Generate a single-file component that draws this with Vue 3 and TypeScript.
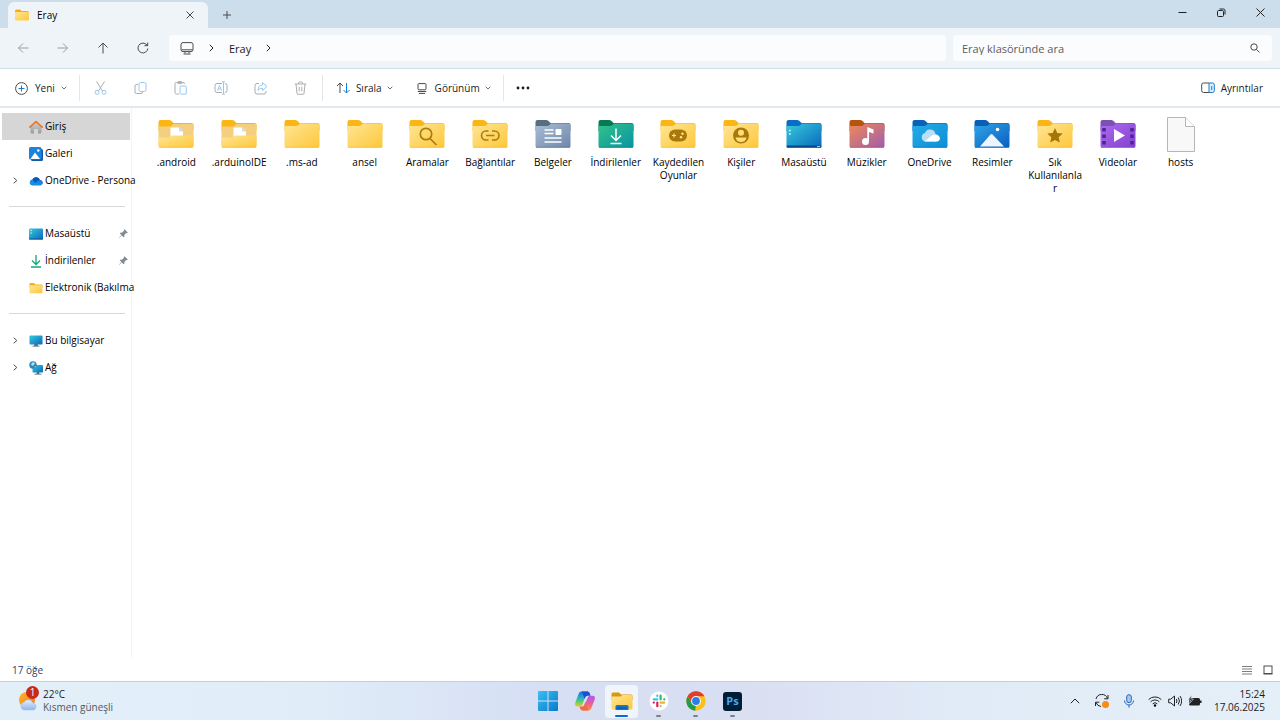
<script setup lang="ts">
type FileKind =
  | 'docs' | 'plain' | 'search' | 'link' | 'text' | 'download' | 'game' | 'person'
  | 'desktop' | 'music' | 'cloud' | 'picture' | 'star' | 'video' | 'file'

interface FileEntry { name: string; kind: FileKind; tone: string }
interface NavEntry { name: string; icon: string; expand?: boolean; pinned?: boolean; active?: boolean }

const files: FileEntry[] = [
  { name: '.android', kind: 'docs', tone: 'yellow' },
  { name: '.arduinoIDE', kind: 'docs', tone: 'yellow' },
  { name: '.ms-ad', kind: 'plain', tone: 'yellow' },
  { name: 'ansel', kind: 'plain', tone: 'yellow' },
  { name: 'Aramalar', kind: 'search', tone: 'yellow' },
  { name: 'Bağlantılar', kind: 'link', tone: 'yellow' },
  { name: 'Belgeler', kind: 'text', tone: 'slate' },
  { name: 'İndirilenler', kind: 'download', tone: 'green' },
  { name: 'Kaydedilen Oyunlar', kind: 'game', tone: 'yellow' },
  { name: 'Kişiler', kind: 'person', tone: 'yellow' },
  { name: 'Masaüstü', kind: 'desktop', tone: 'cyan' },
  { name: 'Müzikler', kind: 'music', tone: 'rose' },
  { name: 'OneDrive', kind: 'cloud', tone: 'sky' },
  { name: 'Resimler', kind: 'picture', tone: 'blue' },
  { name: 'Sık Kullanılanlar', kind: 'star', tone: 'yellow' },
  { name: 'Videolar', kind: 'video', tone: 'violet' },
  { name: 'hosts', kind: 'file', tone: '' },
]

const tones = [
  { id: 'yellow', from: '#ffe596', to: '#fdc83a', tab: '#fbb615' },
  { id: 'slate', from: '#a9bdd4', to: '#6e87aa', tab: '#566e80' },
  { id: 'green', from: '#34c28a', to: '#0794a3', tab: '#077a53' },
  { id: 'cyan', from: '#35cbdc', to: '#0a68bd', tab: '#0a6ec8' },
  { id: 'rose', from: '#f08a56', to: '#a05cae', tab: '#b4540f' },
  { id: 'sky', from: '#27abe6', to: '#0a8fd8', tab: '#0a62b4' },
  { id: 'blue', from: '#2fa4e8', to: '#0a5fbf', tab: '#0a5fb4' },
  { id: 'violet', from: '#ac6cf0', to: '#8440cf', tab: '#7d50b4' },
]

const navGroups: NavEntry[][] = [
  [
    { name: 'Giriş', icon: 'home', active: true },
    { name: 'Galeri', icon: 'gallery' },
    { name: 'OneDrive - Persona', icon: 'onedrive', expand: true },
  ],
  [
    { name: 'Masaüstü', icon: 'desktop', pinned: true },
    { name: 'İndirilenler', icon: 'download', pinned: true },
    { name: 'Elektronik (Bakılma', icon: 'folder' },
  ],
  [
    { name: 'Bu bilgisayar', icon: 'pc', expand: true },
    { name: 'Ağ', icon: 'network', expand: true },
  ],
]

const tabOf = (tone: string): string => tones.find(t => t.id === tone)?.tab ?? '#fbb615'
</script>

<template>
  <div class="screen">
    <svg class="defs" aria-hidden="true">
      <defs>
        <linearGradient v-for="t in tones" :id="'g-' + t.id" :key="t.id" x1="0" y1="0" x2="1" y2="1">
          <stop offset="0" :stop-color="t.from" /><stop offset="1" :stop-color="t.to" />
        </linearGradient>
        <linearGradient id="g-win" x1="0" y1="0" x2="1" y2="1">
          <stop offset="0" stop-color="#3cc0ee" /><stop offset="1" stop-color="#0878cc" />
        </linearGradient>
        <linearGradient id="g-home" x1="0" y1="0" x2="0" y2="1">
          <stop offset="0" stop-color="#d2d2d2" /><stop offset="1" stop-color="#9b9b9b" />
        </linearGradient>
        <linearGradient id="g-cop1" x1="0" y1="0" x2="0" y2="1">
          <stop offset="0" stop-color="#1c6fe0" /><stop offset="0.45" stop-color="#22b4c8" /><stop offset="0.75" stop-color="#7fcf4c" /><stop offset="1" stop-color="#f0c62c" />
        </linearGradient>
        <linearGradient id="g-cop2" x1="0" y1="0" x2="0" y2="1">
          <stop offset="0" stop-color="#a55df0" /><stop offset="0.5" stop-color="#ee5b9b" /><stop offset="1" stop-color="#f79438" />
        </linearGradient>
        <linearGradient id="g-sun" x1="0" y1="0" x2="1" y2="1">
          <stop offset="0" stop-color="#ffb52a" /><stop offset="1" stop-color="#f07a12" />
        </linearGradient>
        <linearGradient id="g-haze" x1="0" y1="0" x2="0" y2="1">
          <stop offset="0" stop-color="#e2eefc" /><stop offset="1" stop-color="#8fb6ee" />
        </linearGradient>
      </defs>
    </svg>

    <header class="titlebar">
      <div class="tab">
        <svg class="tab-icon" width="14" height="12" viewBox="0 0 14 12"><path d="M0 2q0-1.500 1.500-1.500h3.500l1.500 1.500h6q1.500 0 1.500 1.500v2H0z" fill="#f5ae17" /><rect y="3" width="14" height="8.500" rx="1" fill="url(#g-yellow)" /></svg>
        <span class="tab-title">Eray</span>
        <button class="tab-close" aria-label="Sekmeyi kapat"><svg width="8" height="8" viewBox="0 0 8 8"><path d="M.5.5l7 7M7.500.5l-7 7" class="ink" /></svg></button>
      </div>
      <button class="tab-add" aria-label="Yeni sekme"><svg width="8" height="8" viewBox="0 0 8 8"><path d="M4 0v8M0 4h8" class="ink" /></svg></button>
      <div class="win-controls">
        <button aria-label="Küçült"><svg width="9" height="9" viewBox="0 0 9 9"><path d="M.5 4.500h8" class="ink" /></svg></button>
        <button aria-label="Geri yükle"><svg width="9" height="9" viewBox="0 0 9 9"><rect x=".5" y="2.500" width="6" height="6" rx="1" class="ink" /><path d="M2.500 1h4q1.500 0 1.500 1.500v4" class="ink" /></svg></button>
        <button aria-label="Kapat"><svg width="9" height="9" viewBox="0 0 9 9"><path d="M.5.5l8 8M8.500.5l-8 8" class="ink" /></svg></button>
      </div>
    </header>

    <nav class="navbar" aria-label="Gezinti">
      <div class="nav-buttons">
        <button aria-label="Geri"><svg class="faded" width="12" height="12" viewBox="0 0 12 12"><path d="M6 1.500L1.500 6 6 10.500M1.500 6h10" class="ink" /></svg></button>
        <button aria-label="İleri"><svg class="faded" width="12" height="12" viewBox="0 0 12 12"><path d="M6 1.500L10.500 6 6 10.500M10.500 6H.5" class="ink" /></svg></button>
        <button aria-label="Yukarı"><svg width="12" height="12" viewBox="0 0 12 12"><path d="M1.500 5.500L6 1l4.500 4.500M6 1v10.500" class="ink" /></svg></button>
        <button aria-label="Yenile"><svg width="12" height="12" viewBox="0 0 12 12"><path d="M10.800 6.500A4.900 4.900 0 1 1 9 2.200L10.500 3.500M10.700.5v3.200H7.500" class="ink" /></svg></button>
      </div>
      <div class="address">
        <button aria-label="Konumlar"><svg width="14" height="13" viewBox="0 0 14 13"><rect x="1" y=".6" width="12" height="9" rx="2" class="ink" /><path d="M1.500 7.800h11M5 9.800v1.500M9 9.800v1.500M3.500 12h7" class="ink" /></svg></button>
        <svg class="crumb-sep" width="5" height="8" viewBox="0 0 5 8"><path d="M.8.8L4 4 .8 7.200" class="ink dark" /></svg>
        <a href="#" class="crumb">Eray</a>
        <svg class="crumb-sep" width="5" height="8" viewBox="0 0 5 8"><path d="M.8.8L4 4 .8 7.200" class="ink dark" /></svg>
      </div>
      <label class="search">
        <input type="text" placeholder="Eray klasöründe ara" aria-label="Eray klasöründe ara">
        <svg width="10" height="10" viewBox="0 0 10 10"><circle cx="4" cy="4" r="3.200" class="ink" /><path d="M6.300 6.300L9.500 9.500" class="ink" /></svg>
      </label>
    </nav>

    <div class="toolbar" role="toolbar">
      <button class="command first">
        <svg width="13" height="13" viewBox="0 0 13 13"><circle cx="6.500" cy="6.500" r="5.900" class="ink" /><path d="M6.500 3.500v6M3.500 6.500h6" class="accent" /></svg>
        <span>Yeni</span>
        <svg class="chev" width="6" height="4" viewBox="0 0 6 4"><path d="M.7.700L3 3 5.300.7" class="ink" /></svg>
      </button>
      <div class="tools">
        <button aria-label="Kes"><svg class="muted" width="13" height="14" viewBox="0 0 13 14"><path d="M2.500.5l6 9.500M10.500.5L4.500 10" class="ink" /><circle cx="3" cy="11.300" r="2" class="accent" /><circle cx="10" cy="11.300" r="2" class="accent" /></svg></button>
        <button aria-label="Kopyala"><svg class="muted" width="13" height="14" viewBox="0 0 13 14"><path d="M4 3.500H2.500Q1 3.500 1 5v6q0 1.500 1.500 1.500h4.500Q8.500 12.500 8.500 11" class="ink" /><rect x="5" y="1.500" width="7" height="9" rx="1.700" class="accent" /></svg></button>
        <button aria-label="Yapıştır"><svg class="muted" width="13" height="14" viewBox="0 0 13 14"><path d="M5 13H2.500Q1 13 1 11.500v-9Q1 1.500 2.500 1.500h6.500Q10.500 1.500 10.500 3" class="ink" /><rect x="3.500" y=".6" width="4.500" height="2" rx="1" class="ink" /><rect x="6" y="5" width="6.300" height="8.200" rx="1.200" class="accent" /></svg></button>
        <button aria-label="Yeniden adlandır"><svg class="muted" width="14" height="14" viewBox="0 0 14 14"><path d="M8 2.500H3Q1 2.500 1 4.500v5q0 2 2 2h5M11 2.500q2 0 2 2v5q0 2-2 2" class="ink" /><path d="M3.500 9.500L5.500 4.500 7.500 9.500M4.200 8h2.600M9.500 1v12M8 .8h3M8 13.200h3" class="accent" /></svg></button>
        <button aria-label="Paylaş"><svg class="muted" width="14" height="14" viewBox="0 0 14 14"><path d="M5 2.500H3Q1 2.500 1 4.500V11q0 2 2 2h7q2 0 2-2v-1" class="ink" /><path d="M8.500 1.500L13 5.500 8.500 9.500V7.300Q5.500 7 4 9.500 4.200 4.500 8.500 3.800z" class="accent" /></svg></button>
        <button aria-label="Sil"><svg class="muted" width="13" height="14" viewBox="0 0 13 14"><path d="M.7 3h11.600M4.500 3V2q0-1 1-1h2q1 0 1 1v1M2 3l1 9.300q.1 1 1.100 1h4.800q1 0 1.100-1L11 3M5.200 5.700v4.600M7.800 5.700v4.600" class="ink" /></svg></button>
      </div>
      <button class="command">
        <svg width="14" height="12" viewBox="0 0 14 12"><path d="M1 4L4 1l3 3M4 1v10" class="ink" /><path d="M7.500 8L10.500 11l3-3M10.500 11V1" class="accent" /></svg>
        <span>Sırala</span>
        <svg class="chev" width="6" height="4" viewBox="0 0 6 4"><path d="M.7.700L3 3 5.300.7" class="ink" /></svg>
      </button>
      <button class="command view">
        <svg width="10" height="11" viewBox="0 0 10 11"><rect x="1" y=".6" width="8" height="6.200" rx="1" class="ink" /><path d="M.8 8.500h8.400M1.800 10.400h6.400" class="ink" /></svg>
        <span>Görünüm</span>
        <svg class="chev" width="6" height="4" viewBox="0 0 6 4"><path d="M.7.700L3 3 5.300.7" class="ink" /></svg>
      </button>
      <button class="more" aria-label="Diğer"><svg width="14" height="4" viewBox="0 0 14 4"><circle cx="2" cy="2" r="1.400" /><circle cx="7" cy="2" r="1.400" /><circle cx="12" cy="2" r="1.400" /></svg></button>
      <button class="details">
        <svg width="14" height="12" viewBox="0 0 14 12"><path d="M8 1H2.500Q.7 1 .7 2.800v5.900q0 1.800 1.800 1.800H8" class="ink" /><path d="M8 1h3.500q1.800 0 1.800 1.800v5.900q0 1.800-1.800 1.800H8z" fill="#dceefb" stroke="#147fd1" /><path d="M10.700 4v4" class="accent" /></svg>
        <span>Ayrıntılar</span>
      </button>
    </div>

    <main class="content">
      <aside class="sidebar">
        <ul v-for="(group, gi) in navGroups" :key="gi">
          <li v-for="item in group" :key="item.name">
            <button class="side-item" :class="{ active: item.active }">
              <span class="expander"><svg v-if="item.expand" width="5" height="7" viewBox="0 0 5 7"><path d="M.7.700L3.800 3.500.7 6.300" class="ink" /></svg></span>
              <svg v-if="item.icon === 'home'" width="14" height="14" viewBox="0 0 14 14"><path d="M1.500 6.500L7 2l5.500 4.500V12q0 1.500-1.500 1.500H9V9H5v4.500H3Q1.500 13.500 1.500 12z" fill="url(#g-home)" /><path d="M.9 7.200L7 1.700l6.100 5.500" fill="none" stroke="#e8752b" stroke-width="1.700" stroke-linecap="round" stroke-linejoin="round" /></svg>
              <svg v-else-if="item.icon === 'gallery'" width="14" height="14" viewBox="0 0 14 14"><rect x="2" y="2" width="12" height="12" rx="1.500" fill="#1457a8" /><rect width="12.500" height="12.500" rx="1.500" fill="#1c83dc" /><path d="M1.500 12L6 5.500 11 12z" fill="#fff" /><circle cx="9.300" cy="3.500" r="1.200" fill="#fff" /></svg>
              <svg v-else-if="item.icon === 'onedrive'" width="14" height="14" viewBox="0 0 14 14"><path d="M3.200 11.500a3.200 3.200 0 0 1 .3-6.300 4.200 4.200 0 0 1 7.500.8 2.800 2.800 0 0 1 .3 5.500z" fill="#1490df" /><path d="M3.500 5.200a4.200 4.200 0 0 1 7.500.8L6 9z" fill="#0a58b5" /><path d="M6 8l5-2a2.800 2.800 0 0 1 2.500 4z" fill="#1e7fe0" /></svg>
              <svg v-else-if="item.icon === 'desktop'" width="14" height="14" viewBox="0 0 14 14"><rect y="1.500" width="14" height="11" rx="1" fill="url(#g-cyan)" /><path d="M1.500 3.500h1.200M1.500 6h1.200" stroke="#fff" /><path d="M0 12h14" stroke="#0a559c" /></svg>
              <svg v-else-if="item.icon === 'download'" width="14" height="14" viewBox="0 0 14 14"><path d="M7 1v9M3 6.500l4 4 4-4M2 13h10" fill="none" stroke="#17a57c" stroke-width="1.300" /></svg>
              <svg v-else-if="item.icon === 'folder'" width="14" height="14" viewBox="0 0 14 14"><path d="M.5 3q0-1 1-1H5l1.500 1.500h6q1 0 1 1V7H.5z" fill="#f5ae17" /><rect x=".5" y="4.200" width="13" height="8" rx=".8" fill="url(#g-yellow)" /></svg>
              <svg v-else-if="item.icon === 'pc'" width="14" height="14" viewBox="0 0 14 14"><path d="M5.500 10h3l.5 2H5z" fill="#52636f" /><path d="M3.500 12.200h7" stroke="#75838c" /><rect x=".5" y="1.500" width="13" height="9" rx=".8" fill="url(#g-cyan)" /></svg>
              <svg v-else width="14" height="14" viewBox="0 0 14 14"><path d="M8 11h2l.5 2h-3z" fill="#52636f" /><path d="M5.500 13.200h7" stroke="#75838c" /><rect x="3.500" y="4" width="10.500" height="7.500" rx=".8" fill="url(#g-cyan)" /><circle cx="4" cy="4" r="3.700" fill="#2b87b5" /><path d="M2 3l2-2 2 1-1 2-2 1zM5 6l2-1-.5 1.500z" fill="#b9dcec" /></svg>
              <span class="side-label">{{ item.name }}</span>
              <svg v-if="item.pinned" class="pin" width="9" height="9" viewBox="0 0 9 9"><path d="M5.500.2L8.800 3.500 8 4.200 7.300 4 5.500 5.800 5.300 7.700 4.600 8.200 2.800 6.400.3 8.800 0 8.600 2.500 6 .8 4.400 1.300 3.700 3.200 3.500 5 1.700 4.800 1z" fill="#828b92" /></svg>
            </button>
          </li>
        </ul>
      </aside>

      <section class="files">
        <button v-for="f in files" :key="f.name" class="file">
          <svg v-if="f.kind === 'file'" class="file-icon" width="36" height="38" viewBox="0 0 36 38"><path d="M4.500 1.500h18l9 9v25h-27z" fill="#f8f8f8" stroke="#b5b5b5" /><path d="M22.500 1.500v9h9" fill="#fff" stroke="#b5b5b5" /></svg>
          <svg v-else class="file-icon" width="36" height="38" viewBox="0 0 36 38">
            <path d="M.5 6q0-2 2-2h8.500q1.500 0 2.500 1l2 2h18q2 0 2 2v6H.5z" :fill="tabOf(f.tone)" />
            <template v-if="f.kind === 'docs'">
              <path d="M.5 10.500h12l3-2.500h20V30H.5z" fill="#f3cf7f" />
              <path d="M12.500 11.500h9.500l3 3V21H12.500z" fill="#fff" /><path d="M21.500 11.500v3.500H25z" fill="#e6e6e6" stroke="#c4c4c4" stroke-width=".6" />
              <path d="M.5 21.500h11l2.500-2h21.500V30q0 1.500-1.500 1.500H2Q.5 31.500.5 30z" fill="url(#g-yellow)" />
            </template>
            <path v-else d="M.5 10h11.500q1.500 0 2.500-1l1.500-1.500h18q1.500 0 1.500 1.500v21q0 1.500-1.500 1.500H2Q.5 31.500.5 30z" :fill="'url(#g-' + f.tone + ')'" />
            <path d="M1 31.300h34" :stroke="tabOf(f.tone)" stroke-width=".7" />
            <g v-if="f.kind === 'search'" fill="none" stroke="#ad7c0b" stroke-width="1.700"><circle cx="17" cy="18" r="5.700" /><path d="M21 22.500l6.500 6.500" /></g>
            <g v-else-if="f.kind === 'link'" fill="none" stroke="#ad7c0b" stroke-width="1.600"><path d="M16.500 15h-2.500a4.500 4.500 0 0 0 0 9H16.500M20 15h2.500a4.500 4.500 0 0 1 0 9H20M14 19.500h8.500" /></g>
            <g v-else-if="f.kind === 'text'"><path d="M9.500 14h9M9.500 17.500h9M9.500 22h17M9.500 26h17" stroke="#fff" stroke-width="1.600" /><rect x="20.500" y="13" width="6" height="6" rx="1" fill="#fff" /></g>
            <g v-else-if="f.kind === 'download'" fill="none" stroke="#fff" stroke-width="1.500"><path d="M18 12.500v11.500M13 19.500l5 5 5-5M12.500 27.500h11" /></g>
            <g v-else-if="f.kind === 'game'"><rect x="9" y="13.500" width="18" height="12" rx="6" fill="#aa7808" /><path d="M14 17.500v4M12 19.500h4" stroke="#ffe596" stroke-width="1.200" /><circle cx="22.500" cy="17.800" r="1.200" fill="#ffe596" /><circle cx="21" cy="21.300" r="1.200" fill="#ffe596" /></g>
            <g v-else-if="f.kind === 'person'"><circle cx="18" cy="19.500" r="8" fill="#aa7808" /><circle cx="18" cy="16.800" r="3" fill="#ffdd78" /><path d="M12.500 21.500h11q-1 4.500-5.500 4.500t-5.500-4.500z" fill="#ffdd78" /></g>
            <g v-else-if="f.kind === 'desktop'"><path d="M3 14.500h1.700M3 18h1.700" stroke="#e8fbff" stroke-width="1.500" /><path d="M.7 30.500h34.600" stroke="#0b4786" stroke-width="2" /><path d="M31 30.500h3" stroke="#8acff5" /></g>
            <g v-else-if="f.kind === 'music'"><circle cx="16.500" cy="25.500" r="3.500" fill="#fff" /><path d="M18.300 25.500V11l6.200 2.500v4l-4.500-1.500v9.500z" fill="#fff" /></g>
            <g v-else-if="f.kind === 'cloud'"><path d="M13 25.500a4.400 4.400 0 0 1 0-8.500 5.500 5.500 0 0 1 10.500 1 3.900 3.900 0 0 1 .5 7.500z" fill="#b9def5" /><path d="M12.500 25.500l8-6.500q7-1.500 7.500 3.500-.5 3-3.500 3z" fill="#fff" /></g>
            <g v-else-if="f.kind === 'picture'"><path d="M6 30.500l10.500-12q1-1 2 0l11.500 12z" fill="#eef5fd" /><circle cx="23.500" cy="13.500" r="1.800" fill="#fff" /></g>
            <path v-else-if="f.kind === 'star'" d="M18 12l2.300 5 5.400.6-4 3.700 1.100 5.300-4.800-2.700-4.800 2.700 1.100-5.300-4-3.700 5.400-.6z" fill="#a67509" />
            <g v-else-if="f.kind === 'video'"><path d="M14 13l11 6.500L14 26z" fill="#fff" /><path d="M4 12v17M32 12v17" stroke="#4b2590" stroke-width="3.500" stroke-dasharray="3.500 3" /></g>
          </svg>
          <span class="file-label">{{ f.name }}</span>
        </button>
      </section>
    </main>

    <footer class="statusbar">
      <span class="count">17 öğe</span>
      <div class="view-modes">
        <button aria-label="Ayrıntılar"><svg width="10" height="10" viewBox="0 0 10 10"><path d="M0 1.500h10M0 4h10M0 6.500h10M0 9h10" stroke="#5c5c5c" stroke-width=".8" /></svg></button>
        <button aria-label="Büyük simgeler"><svg width="10" height="10" viewBox="0 0 10 10"><rect x="1" y="1" width="8" height="7.500" fill="none" stroke="#4c4c4c" /><path d="M.5 9h9" stroke="#4c4c4c" /></svg></button>
      </div>
    </footer>

    <div class="taskbar">
      <button class="weather">
        <span class="weather-icon">
          <svg width="20" height="20" viewBox="0 0 20 20"><circle cx="9" cy="9" r="8" fill="url(#g-sun)" /><path d="M6 19a4 4 0 0 1 0-7.800 5 5 0 0 1 9 .8 3.600 3.600 0 0 1 .5 7z" fill="url(#g-haze)" stroke="#9bbcf0" stroke-width=".5" /></svg>
          <span class="badge">1</span>
        </span>
        <span class="weather-text"><span>22°C</span><span class="sub">Kısmen güneşli</span></span>
      </button>
      <div class="apps">
        <button aria-label="Başlat"><svg width="20" height="20" viewBox="0 0 20 20"><path d="M0 1q0-1 1-1h8.500v9.500H0zM10.500 0H19q1 0 1 1v8.500h-9.500zM0 10.500h9.500V20H1q-1 0-1-1zM10.500 10.500H20V19q0 1-1 1h-8.500z" fill="url(#g-win)" /></svg></button>
        <button aria-label="Copilot"><svg width="22" height="20" viewBox="0 0 22 20"><path d="M14 .5H7.500Q5.500.5 4.700 2.800L1.300 11.500Q.2 15.500 3.500 15.500H6q1.700 0 2.300-1.700L11.500 5q.8-2 2.500-2z" fill="url(#g-cop1)" /><path d="M7.500.5H13.500Q15.300.5 15.800 2.300L16.500 4.700H13.500Q12 4.700 11.300 6.300L10.500 8 9 3.500Q8.500 1.500 7.500.5z" fill="#1f4fcf" /><path d="M8 19.500h6.500q2 0 2.800-2.300L20.700 8.500Q21.800 4.700 18.500 4.700H16q-1.700 0-2.300 1.700L10.500 15q-.8 2-2.500 2z" fill="url(#g-cop2)" /><path d="M14.500 19.500h-6Q6.700 19.500 6.200 17.700L5.500 15.500h2.500q1.500 0 2.200-1.500L11.500 10.500z" fill="#f4694e" /></svg></button>
        <button class="current running" aria-label="Dosya Gezgini"><svg width="22" height="20" viewBox="0 0 22 20"><path d="M.5 3Q.5 1.500 2 1.500h6l2 2h10q1.500 0 1.500 1.500v4H.5z" fill="#dc960c" /><path d="M.5 5.500h9L11.500 4H20q1.500 0 1.500 1.500V17q0 1.500-1.500 1.500H2Q.5 18.500.5 17z" fill="url(#g-yellow)" /><path d="M4.500 19v-3.500Q4.500 14 6 14h10q1.500 0 1.500 1.500V19z" fill="#1477cc" /><path d="M6 17h10" stroke="#0b4d91" /></svg></button>
        <button class="running" aria-label="Slack"><svg width="20" height="20" viewBox="0 0 20 20"><circle cx="10" cy="10" r="9.500" fill="#fff" /><g fill="none" stroke-width="2.200" stroke-linecap="round"><path d="M8.300 4.700v.2M4.700 8.300h3.600" stroke="#36c5f0" /><path d="M11.600 4.700v3.600M15.200 8.300h.2" stroke="#2eb67d" /><path d="M4.700 11.600h.2M8.300 11.600v3.600" stroke="#e01e5a" /><path d="M11.600 11.600h3.600M11.600 15v.2" stroke="#ecb22e" /></g></svg></button>
        <button class="running" aria-label="Chrome"><svg width="20" height="20" viewBox="0 0 20 20"><circle cx="10" cy="10" r="9.700" fill="#fbc116" /><path d="M1.600 5.150A9.700 9.700 0 0 1 18.400 5.150H10L5.800 12.400z" fill="#e33b2e" /><path d="M1.600 5.150L5.800 12.400 10 14.850 9.500 19.700A9.700 9.700 0 0 1 1.600 5.150z" fill="#229a4d" /><path d="M14.200 12.400L10 19.700H9.400L10 13z" fill="#fbc116" /><circle cx="10" cy="10" r="4.900" fill="#fff" /><circle cx="10" cy="10" r="3.900" fill="#2b7de9" /></svg></button>
        <button class="running" aria-label="Photoshop"><span class="ps">Ps</span></button>
      </div>
      <div class="tray">
        <button aria-label="Gizli simgeler"><svg width="10" height="6" viewBox="0 0 10 6"><path d="M.8 5.200L5 1l4.200 4.200" class="ink dark" /></svg></button>
        <button aria-label="Güncelleme"><svg width="16" height="16" viewBox="0 0 16 16"><path d="M2 6a6 6 0 0 1 11.500-.5M14 2v3.800h-3.800M7 13.500a6 6 0 0 1-5-4M1.500 13V9.200h3.800" class="ink dark" /><circle cx="11.500" cy="11.500" r="3.500" fill="#f68c12" /></svg></button>
        <button aria-label="Mikrofon"><svg width="12" height="14" viewBox="0 0 12 14"><rect x="3.700" y=".7" width="4.600" height="8" rx="2.300" fill="#a9c9f0" stroke="#2467b9" /><path d="M1.500 6.500a4.500 4.500 0 0 0 9 0M6 11v2.700" fill="none" stroke="#2467b9" /></svg></button>
        <button class="system" aria-label="Ağ, ses ve pil">
          <svg width="14" height="12" viewBox="0 0 14 12"><path d="M.7 4.500a9 9 0 0 1 12.600 0M2.700 6.700a6.200 6.200 0 0 1 8.600 0M4.700 8.800a3.300 3.300 0 0 1 4.600 0" class="ink dark" /><circle cx="7" cy="10.500" r="1.200" /></svg>
          <svg width="14" height="12" viewBox="0 0 14 12"><path d="M.7 4.200h2L6.500 1v10L2.700 7.800h-2zM8.300 4q1.400 2 0 4M10.200 2.500q2.600 3.500 0 7M12 1q3.400 5 0 10" class="ink dark" /></svg>
          <svg width="14" height="12" viewBox="0 0 14 12"><rect x="1" y="3" width="11" height="7.500" rx="1.500" fill="#222" /><path d="M12.800 5.500v2.500" stroke="#222" stroke-width="1.500" /><path d="M3.500 0L.3 5h2.200L1.500 8.500 5.500 4H3z" fill="#222" stroke="#e5eff8" stroke-width=".6" /></svg>
        </button>
        <button class="clock"><span>15:24</span><span>17.06.2025</span></button>
      </div>
    </div>
  </div>
</template>

<style>
body { margin: 0; background: #fff; }
</style>

<style scoped>
.screen {
  display: flex;
  flex-direction: column;
  min-height: 100vh;
  background: #fff;
  color: #1b1b1b;
  font-family: "Open Sans", "Noto Sans", sans-serif;
  font-size: 10px;
  line-height: 13px;
}
.defs { position: absolute; width: 0; height: 0; }
svg { display: block; flex: none; }
button {
  display: flex;
  align-items: center;
  border: 0;
  padding: 0;
  background: none;
  color: inherit;
  font: inherit;
  white-space: nowrap;
}
.ink { fill: none; stroke: #4a4a4a; stroke-width: 1; }
.ink.dark { stroke: #222; }
.accent { fill: none; stroke: #147fd1; stroke-width: 1; }
.muted { opacity: 0.45; }
.muted .accent { stroke: #1688e4; }
.faded { opacity: 0.5; }

.titlebar { display: flex; height: 28px; background: #ccdeeb; }
.tab {
  display: flex;
  align-items: center;
  box-sizing: border-box;
  width: 200px;
  margin: 2px 0 0 8px;
  padding: 0 8px 0 7px;
  border-radius: 6px 6px 0 0;
  background: #eff4f9;
}
.tab-title { flex: 1; margin-left: 8px; color: #000; }
.tab-close, .tab-add { justify-content: center; width: 20px; }
.tab-add { width: 38px; padding-top: 2px; }
.win-controls { display: flex; margin-left: auto; height: 24px; }
.win-controls button { justify-content: center; width: 39px; }
.win-controls .ink { stroke: #222; }

.navbar {
  display: flex;
  align-items: center;
  box-sizing: border-box;
  height: 41px;
  padding: 0 8px 0 3px;
  border-bottom: 1px solid #cddfea;
  background: #eff4f9;
}
.nav-buttons { display: flex; }
.nav-buttons button { justify-content: center; width: 40px; height: 26px; }
.address {
  display: flex;
  flex: 1;
  align-items: center;
  height: 26px;
  margin: 0 7px 0 6px;
  padding-left: 11px;
  border-radius: 3px;
  background: #fbfcfe;
}
.crumb-sep { margin: 0 15px; }
.crumb { color: #1b1b1b; font-size: 11px; text-decoration: none; }
.search {
  display: flex;
  flex: 0 0 319px;
  align-items: center;
  box-sizing: border-box;
  height: 26px;
  padding: 0 12px 0 9px;
  border-radius: 3px;
  background: #fbfcfe;
}
.search input {
  flex: 1;
  min-width: 0;
  padding: 0;
  border: 0;
  outline: 0;
  background: none;
  font: inherit;
  font-size: 11px;
}
.search input::placeholder { color: #5b5d60; opacity: 1; }

.toolbar {
  display: flex;
  align-items: center;
  height: 36px;
  padding: 1px 17px 0 0;
  border-bottom: 2px solid #e0e9ef;
}
.command { gap: 6px; height: 26px; padding: 0 12px 0 13px; }
.command.first { gap: 7px; padding-left: 15px; }
.command.view { padding: 0 12px; }
.command.view span { margin-left: 2px; }
.chev { opacity: 0.8; margin-left: -1px; }
.tools {
  display: flex;
  padding: 0 1px;
  border: solid #e6e6e6;
  border-width: 0 1px;
}
.tools button { justify-content: center; width: 40px; height: 26px; }
.more { justify-content: center; width: 40px; height: 26px; border-left: 1px solid #e6e6e6; }
.more svg { fill: #1b1b1b; }
.details { gap: 6px; margin-left: auto; }

.content { display: flex; flex: 1; }
.sidebar {
  box-sizing: border-box;
  width: 132px;
  padding: 5px 1px 0 2px;
  border-right: 1px solid #f4f4f4;
}
ul { margin: 0; padding: 0; list-style: none; }
ul + ul::before {
  content: "";
  display: block;
  height: 1px;
  margin: 12px 5px 13px 7px;
  background: #d8d8d8;
}
.side-item { width: 100%; height: 27px; color: #000; }
.side-item.active { background: #d6d6d6; }
.expander { flex: none; width: 16px; padding-left: 11px; }
.side-label { flex: 1; margin-left: 2px; text-align: left; }
.pin { margin-right: 2px; }

.files {
  display: grid;
  flex: 1;
  grid-template-columns: repeat(auto-fill, minmax(62px, 1fr));
  align-content: start;
  padding: 8px 68px 0 13px;
}
.file { flex-direction: column; align-items: center; white-space: normal; }
.file-label { box-sizing: border-box; width: 56px; padding-top: 2px; overflow-wrap: anywhere; text-align: center; color: #000; }

.statusbar {
  display: flex;
  align-items: center;
  justify-content: space-between;
  box-sizing: border-box;
  height: 23px;
  padding: 1px 7px 0 12px;
}
.count { color: #2b436b; }
.view-modes { display: flex; gap: 11px; }

.taskbar {
  display: grid;
  grid-template-columns: 1fr auto 1fr;
  align-items: center;
  box-sizing: border-box;
  height: 39px;
  border-top: 1px solid #c6cdd6;
  background: linear-gradient(90deg, #e3eff8 0%, #e0ecf8 25%, #d6dff4 42%, #dadff2 58%, #e1ebf7 75%, #e4eff8 100%);
}
.weather { gap: 5px; padding-left: 18px; text-align: left; }
.weather-icon { position: relative; }
.badge {
  position: absolute;
  top: -5px;
  right: -1px;
  width: 13px;
  height: 13px;
  border-radius: 50%;
  background: #c42b1c;
  color: #fff;
  line-height: 13px;
  text-align: center;
}
.weather-text { display: flex; flex-direction: column; }
.sub { color: #55585c; }
.apps { display: flex; }
.apps button {
  position: relative;
  justify-content: center;
  box-sizing: border-box;
  width: 33px;
  height: 33px;
  margin: 0 2px;
  border-radius: 4px;
}
.apps .current { background: #f0f4fb; }
.running::after {
  content: "";
  position: absolute;
  bottom: 1px;
  width: 5px;
  height: 2px;
  border-radius: 2px;
  background: #7c8088;
}
.apps .current::after { width: 13px; background: #0a6cc8; }
.ps {
  width: 19px;
  height: 19px;
  border-radius: 3px;
  background: #001e36;
  color: #45a9fb;
  font-size: 11px;
  font-weight: 700;
  line-height: 18px;
  text-align: center;
}
.tray { display: flex; align-items: center; justify-content: flex-end; padding-right: 15px; }
.tray button { justify-content: center; }
.tray button:nth-child(1) { width: 26px; }
.tray button:nth-child(2) { width: 27px; }
.tray button:nth-child(3) { width: 27px; }
.tray .system { gap: 6px; margin: 0 12px 0 6px; }
.tray .clock { flex-direction: column; align-items: flex-end; }
</style>
